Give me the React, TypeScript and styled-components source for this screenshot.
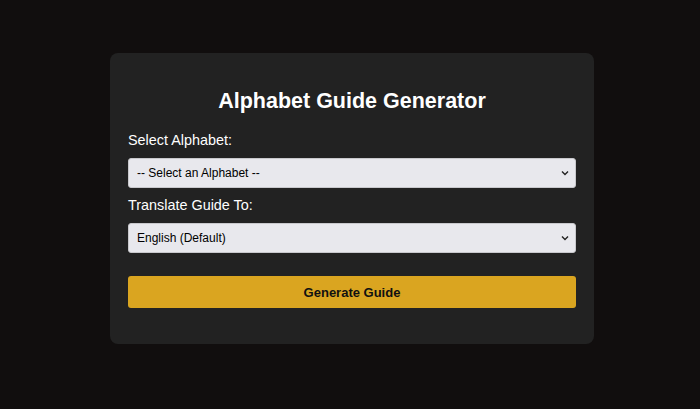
import React from 'react'
import styled, { createGlobalStyle } from 'styled-components'

const GlobalStyle = createGlobalStyle`
  html, body {
    margin: 0;
    padding: 0;
    background-color: #110e0e;
    font-family: "Liberation Sans", Arial, sans-serif;
  }
`

const Page = styled.div`
  display: flex;
  justify-content: center;
  align-items: flex-start;
  padding: 53px 0 0 4px;
  min-height: 409px;
  box-sizing: border-box;
`
const Card = styled.div`
  width: 484px;
  box-sizing: border-box;
  background-color: #222222;
  border-radius: 8px;
  padding: 36px 18px 36px 18px;
`
const Title = styled.h1`
  margin: 0 0 19px 0;
  text-align: center;
  color: #ffffff;
  font-family: "Liberation Sans", Arial, sans-serif;
  font-size: 21.5px;
  font-weight: bold;
  line-height: 24px;
`
const Field = styled.div`
  display: flex;
  flex-direction: column;
  margin-bottom: 9px;
`
const Label = styled.label`
  color: #ffffff;
  font-family: "Liberation Sans", Arial, sans-serif;
  font-size: 14.4px;
  line-height: 16px;
  margin-bottom: 10px;
`
const SelectBox = styled.div`
  position: relative;
  height: 30px;
  box-sizing: border-box;
  background-color: #e8e8ed;
  border: 1px solid #c8c8cc;
  border-radius: 3px;
  display: flex;
  align-items: center;
  padding: 0 8px;
  font-family: "Liberation Sans", Arial, sans-serif;
  font-size: 12px;
  color: #000000;
`
const Chevron = styled.svg`
  position: absolute;
  right: 6px;
  top: 50%;
  margin-top: -3px;
`
const Button = styled.button`
  margin-top: 14px;
  width: 100%;
  height: 32px;
  border: none;
  border-radius: 3px;
  background-color: #daa520;
  color: #111111;
  font-family: "Liberation Sans", Arial, sans-serif;
  font-size: 13px;
  font-weight: bold;
`

const Select = ({ value }: { value: string }) => (
  <SelectBox>
    {value}
    <Chevron width="8" height="6" viewBox="0 0 8 6">
      <path d="M1 1.5 L4 4.5 L7 1.5" fill="none" stroke="#222" strokeWidth="1.4" />
    </Chevron>
  </SelectBox>
)

const App = () => {
  return (
    <>
      <GlobalStyle />
      <Page>
        <Card>
          <Title>Alphabet Guide Generator</Title>
          <Field>
            <Label>Select Alphabet:</Label>
            <Select value="-- Select an Alphabet --" />
          </Field>
          <Field>
            <Label>Translate Guide To:</Label>
            <Select value="English (Default)" />
          </Field>
          <Button>Generate Guide</Button>
        </Card>
      </Page>
    </>
  )
}

export default App
